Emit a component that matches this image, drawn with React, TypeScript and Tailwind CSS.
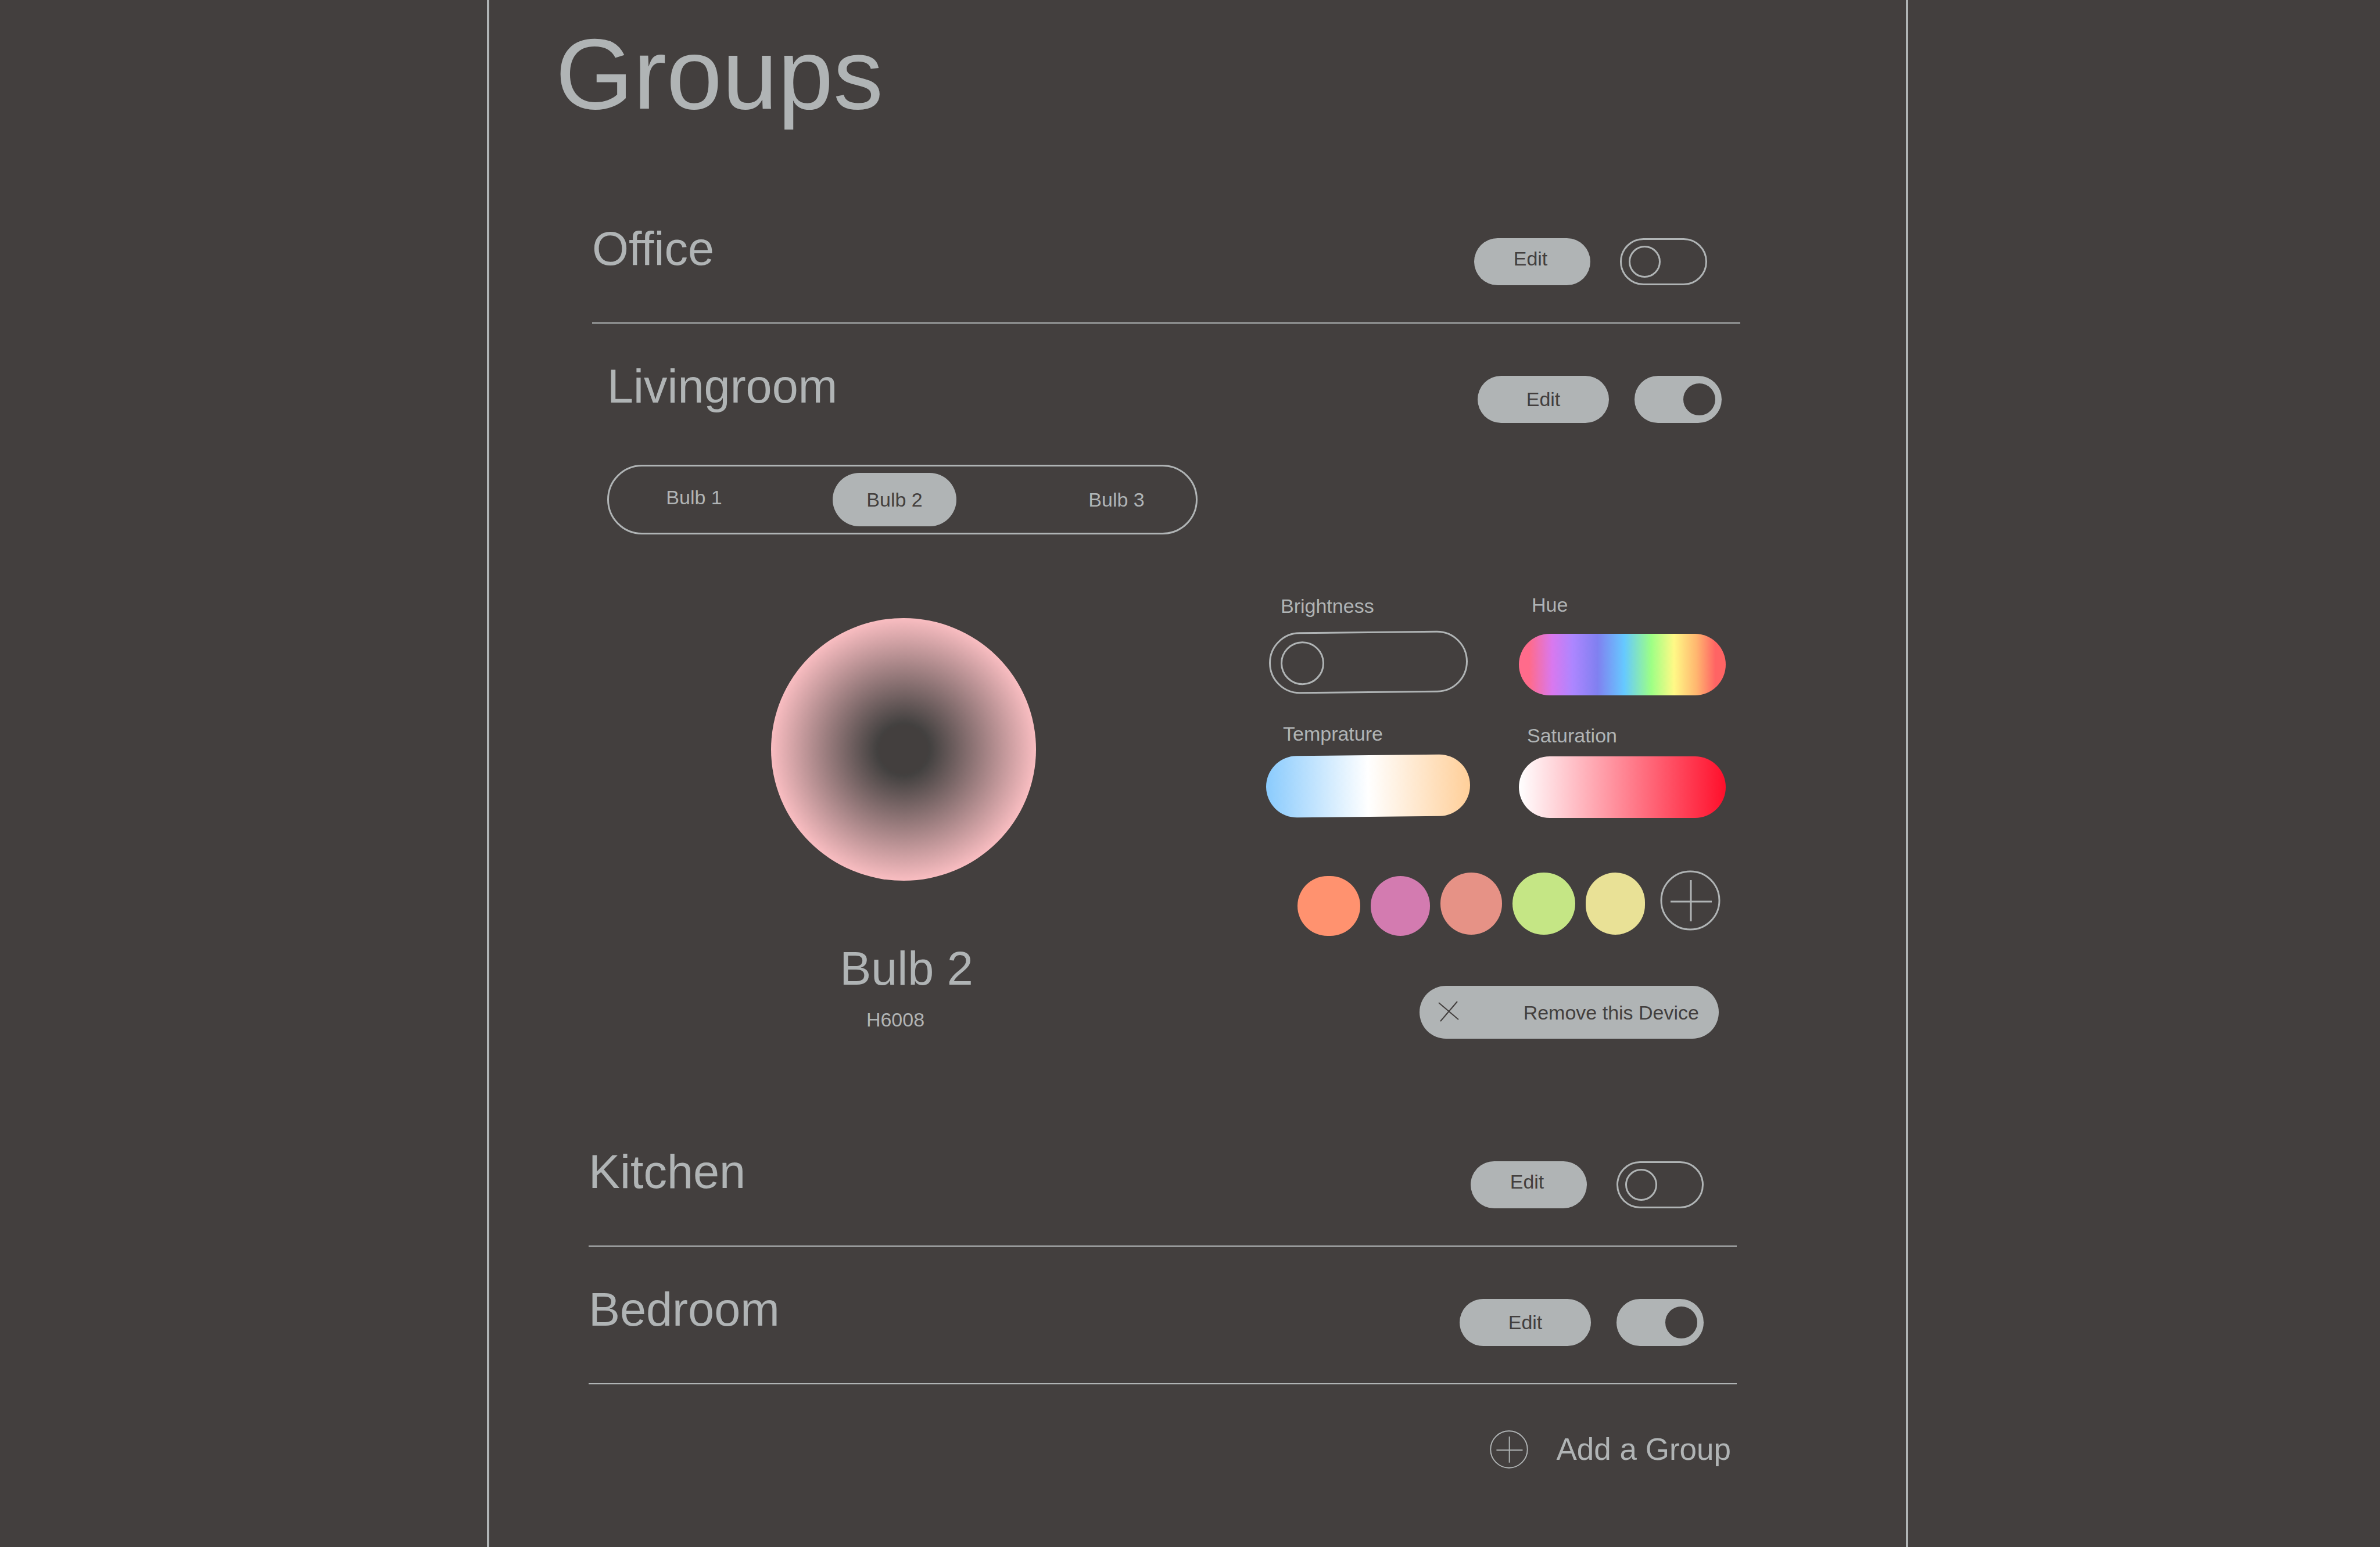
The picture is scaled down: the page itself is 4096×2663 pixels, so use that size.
import { useState } from "react";

type GroupRowProps = { name: string; on: boolean };

function Toggle({ name, on }: GroupRowProps) {
  return (
    <input
      type="checkbox"
      role="switch"
      aria-label={`${name} power`}
      defaultChecked={on}
      className="block h-[81px] w-[150px] shrink-0 cursor-pointer appearance-none rounded-full border-[3px] border-[#b0b4b5] before:mt-[10px] before:ml-[12px] before:block before:size-[55px] before:rounded-full before:border-[3px] before:border-[#b0b4b5] before:content-[''] checked:bg-[#b0b4b5] checked:before:ml-[81px] checked:before:border-[#433f3e] checked:before:bg-[#433f3e]"
    />
  );
}

function EditButton({ name, on }: GroupRowProps) {
  return (
    <button
      type="button"
      aria-label={`Edit ${name}`}
      className={
        on
          ? "h-[81px] w-[226px] rounded-full bg-[#b0b4b5] pb-[2px] text-[34px] leading-[40px] text-[#433f3e]"
          : "h-[81px] w-[200px] rounded-full bg-[#b0b4b5] pr-[6px] pb-[12px] text-[34px] leading-[40px] text-[#433f3e]"
      }
    >
      Edit
    </button>
  );
}

function GroupHeader({ name, on }: GroupRowProps) {
  return (
    <div className="flex items-start justify-between">
      <h2 className="text-[81px] leading-[81px]">{name}</h2>
      <div className={on ? "mt-[22px] flex gap-[44px]" : "mt-[22px] flex gap-[51px]"}>
        <EditButton name={name} on={on} />
        <Toggle name={name} on={on} />
      </div>
    </div>
  );
}

function GroupRow({ name, on }: GroupRowProps) {
  return (
    <section className="border-b-2 border-[#b0b4b5] pt-[68px] pr-[57px] pb-[64px]">
      <GroupHeader name={name} on={on} />
    </section>
  );
}

function PlusCircle({ className }: { className: string }) {
  return (
    <svg viewBox="0 0 104 104" fill="none" stroke="currentColor" strokeWidth="3" className={className} aria-hidden="true">
      <circle cx="52" cy="52" r="50" />
      <path d="M18 54H89M53 17V88" />
    </svg>
  );
}

const swatches = [
  { name: "Orange", style: "mt-[10px] h-[103px] w-[108px] bg-[#ff926f]" },
  { name: "Orchid", style: "mt-[10px] h-[103px] w-[102px] bg-[#d37bb0]" },
  { name: "Salmon", style: "mt-[4px] h-[107px] w-[106px] bg-[#e69286]" },
  { name: "Lime", style: "mt-[4px] h-[107px] w-[108px] bg-[#c5e685]" },
  { name: "Straw", style: "mt-[4px] h-[107px] w-[102px] bg-[#e9e196]" },
];

const bulbs = [
  { name: "Bulb 1", style: "pb-[8px]" },
  { name: "Bulb 2", style: "ml-[132px]" },
  { name: "Bulb 3", style: "ml-[169px]" },
];

const hiddenThumb = "cursor-pointer appearance-none rounded-full [&::-webkit-slider-thumb]:size-[75px] [&::-webkit-slider-thumb]:appearance-none [&::-webkit-slider-thumb]:bg-transparent";

export default function App() {
  const [active, setActive] = useState("Bulb 2");

  return (
    <div className="grid min-h-screen grid-cols-[838fr_2446fr_812fr] bg-[#433f3e] font-['Liberation_Sans',Arial,sans-serif] text-[#b0b4b5]">
      <main className="col-start-2 border-x-4 border-[#b0b4b5] pt-[42px] pb-[80px]">
        <h1 className="ml-[114px] text-[172px] leading-[171px]">Groups</h1>

        <div className="mt-[107px] mr-[285px] ml-[177px]">
          <GroupRow name="Office" on={false} />
        </div>

        <section className="mr-[310px] ml-[203px] pt-[68px]">
          <div className="pr-[7px]">
            <GroupHeader name="Livingroom" on={true} />
          </div>

          <div role="tablist" aria-label="Bulbs" className="mt-[72px] flex h-[120px] w-[1016px] items-center rounded-full border-[3px] border-[#b0b4b5] pl-[40px]">
            {bulbs.map((b) => (
              <button
                key={b.name}
                type="button"
                role="tab"
                aria-selected={active === b.name}
                onClick={() => setActive(b.name)}
                className={`h-[92px] w-[213px] rounded-full text-[34px] leading-[40px] aria-selected:bg-[#b0b4b5] aria-selected:text-[#433f3e] ${b.style}`}
              >
                {b.name}
              </button>
            ))}
          </div>

          <div className="mt-[101px] flex items-start justify-between pl-[282px]">
            <div className="flex w-[456px] flex-col items-center pt-[43px]">
              <div className="h-[452px] w-full rounded-[50%] bg-[radial-gradient(closest-side,#433f3e_18%,#434140_20%,#f9bdc1_100%)]" />
              <h3 className="mt-[111px] pl-[10px] text-[81px] leading-[81px]">Bulb 2</h3>
              <p className="mt-[27px] pr-[28px] text-[34px] leading-[40px]">H6008</p>
            </div>

            <div className="flex flex-col items-end">
              <div className="flex items-start gap-[84px] text-[34px] leading-[40px]">
                <div className="flex w-[351px] flex-col items-start pt-[2px]">
                  <label htmlFor="brightness" className="ml-[25px]">Brightness</label>
                  <input
                    id="brightness"
                    type="range"
                    defaultValue={0}
                    className="mt-[24px] ml-[5px] h-[106px] w-[342px] rotate-[-0.6deg] cursor-pointer appearance-none rounded-full border-[3px] border-[#b0b4b5] px-[17px] [&::-webkit-slider-thumb]:size-[75px] [&::-webkit-slider-thumb]:appearance-none [&::-webkit-slider-thumb]:rounded-full [&::-webkit-slider-thumb]:border-[3px] [&::-webkit-slider-thumb]:border-solid [&::-webkit-slider-thumb]:border-[#b0b4b5]"
                  />
                  <label htmlFor="temperature" className="mt-[50px] ml-[29px]">Temprature</label>
                  <input
                    id="temperature"
                    type="range"
                    className={`mt-[17px] h-[106px] w-full rotate-[-0.6deg] bg-[linear-gradient(90deg,#8acbfd,#ffffff_50%,#ffcf99)] ${hiddenThumb}`}
                  />
                </div>
                <div className="flex w-[356px] flex-col items-start">
                  <label htmlFor="hue" className="ml-[22px]">Hue</label>
                  <input
                    id="hue"
                    type="range"
                    className={`mt-[30px] h-[106px] w-full bg-[linear-gradient(90deg,#ff6b8b_5%,#d978ee_16%,#ad86ff_26%,#8080f0_38%,#66c9ff_51%,#9dff85_64%,#fff986_75%,#ffb56f_86%,#ff6464_95%)] ${hiddenThumb}`}
                  />
                  <label htmlFor="saturation" className="mt-[49px] ml-[14px]">Saturation</label>
                  <input
                    id="saturation"
                    type="range"
                    className={`mt-[16px] h-[106px] w-full bg-[linear-gradient(90deg,#ffffff,#ff0f2b)] ${hiddenThumb}`}
                  />
                </div>
              </div>

              <div className="mt-[90px] mr-[9px] flex items-start gap-[18px]">
                {swatches.map((s) => (
                  <button key={s.name} type="button" aria-label={s.name} className={`rounded-full ${s.style}`} />
                ))}
                <button type="button" aria-label="Add colour" className="ml-[8px]">
                  <PlusCircle className="block size-[104px]" />
                </button>
              </div>

              <button
                type="button"
                className="mt-[86px] mr-[12px] flex h-[91px] w-[515px] items-center justify-between rounded-full bg-[#b0b4b5] pr-[34px] pl-[32px] text-[34px] leading-[40px] text-[#433f3e]"
              >
                <svg viewBox="0 0 36 36" fill="none" stroke="currentColor" strokeWidth="2" className="mb-[4px] size-[36px]" aria-hidden="true">
                  <path d="M1 3L35 32M33 1L4 35" />
                </svg>
                Remove this Device
              </button>
            </div>
          </div>
        </section>

        <div className="mt-[121px] mr-[291px] ml-[171px]">
          <GroupRow name="Kitchen" on={false} />
          <GroupRow name="Bedroom" on={true} />
          <div className="mt-[79px] flex justify-end pr-[10px]">
            <button type="button" className="flex items-center gap-[48px] text-[53px] leading-[66px]">
              <PlusCircle className="block size-[66px]" />
              Add a Group
            </button>
          </div>
        </div>
      </main>
    </div>
  );
}
